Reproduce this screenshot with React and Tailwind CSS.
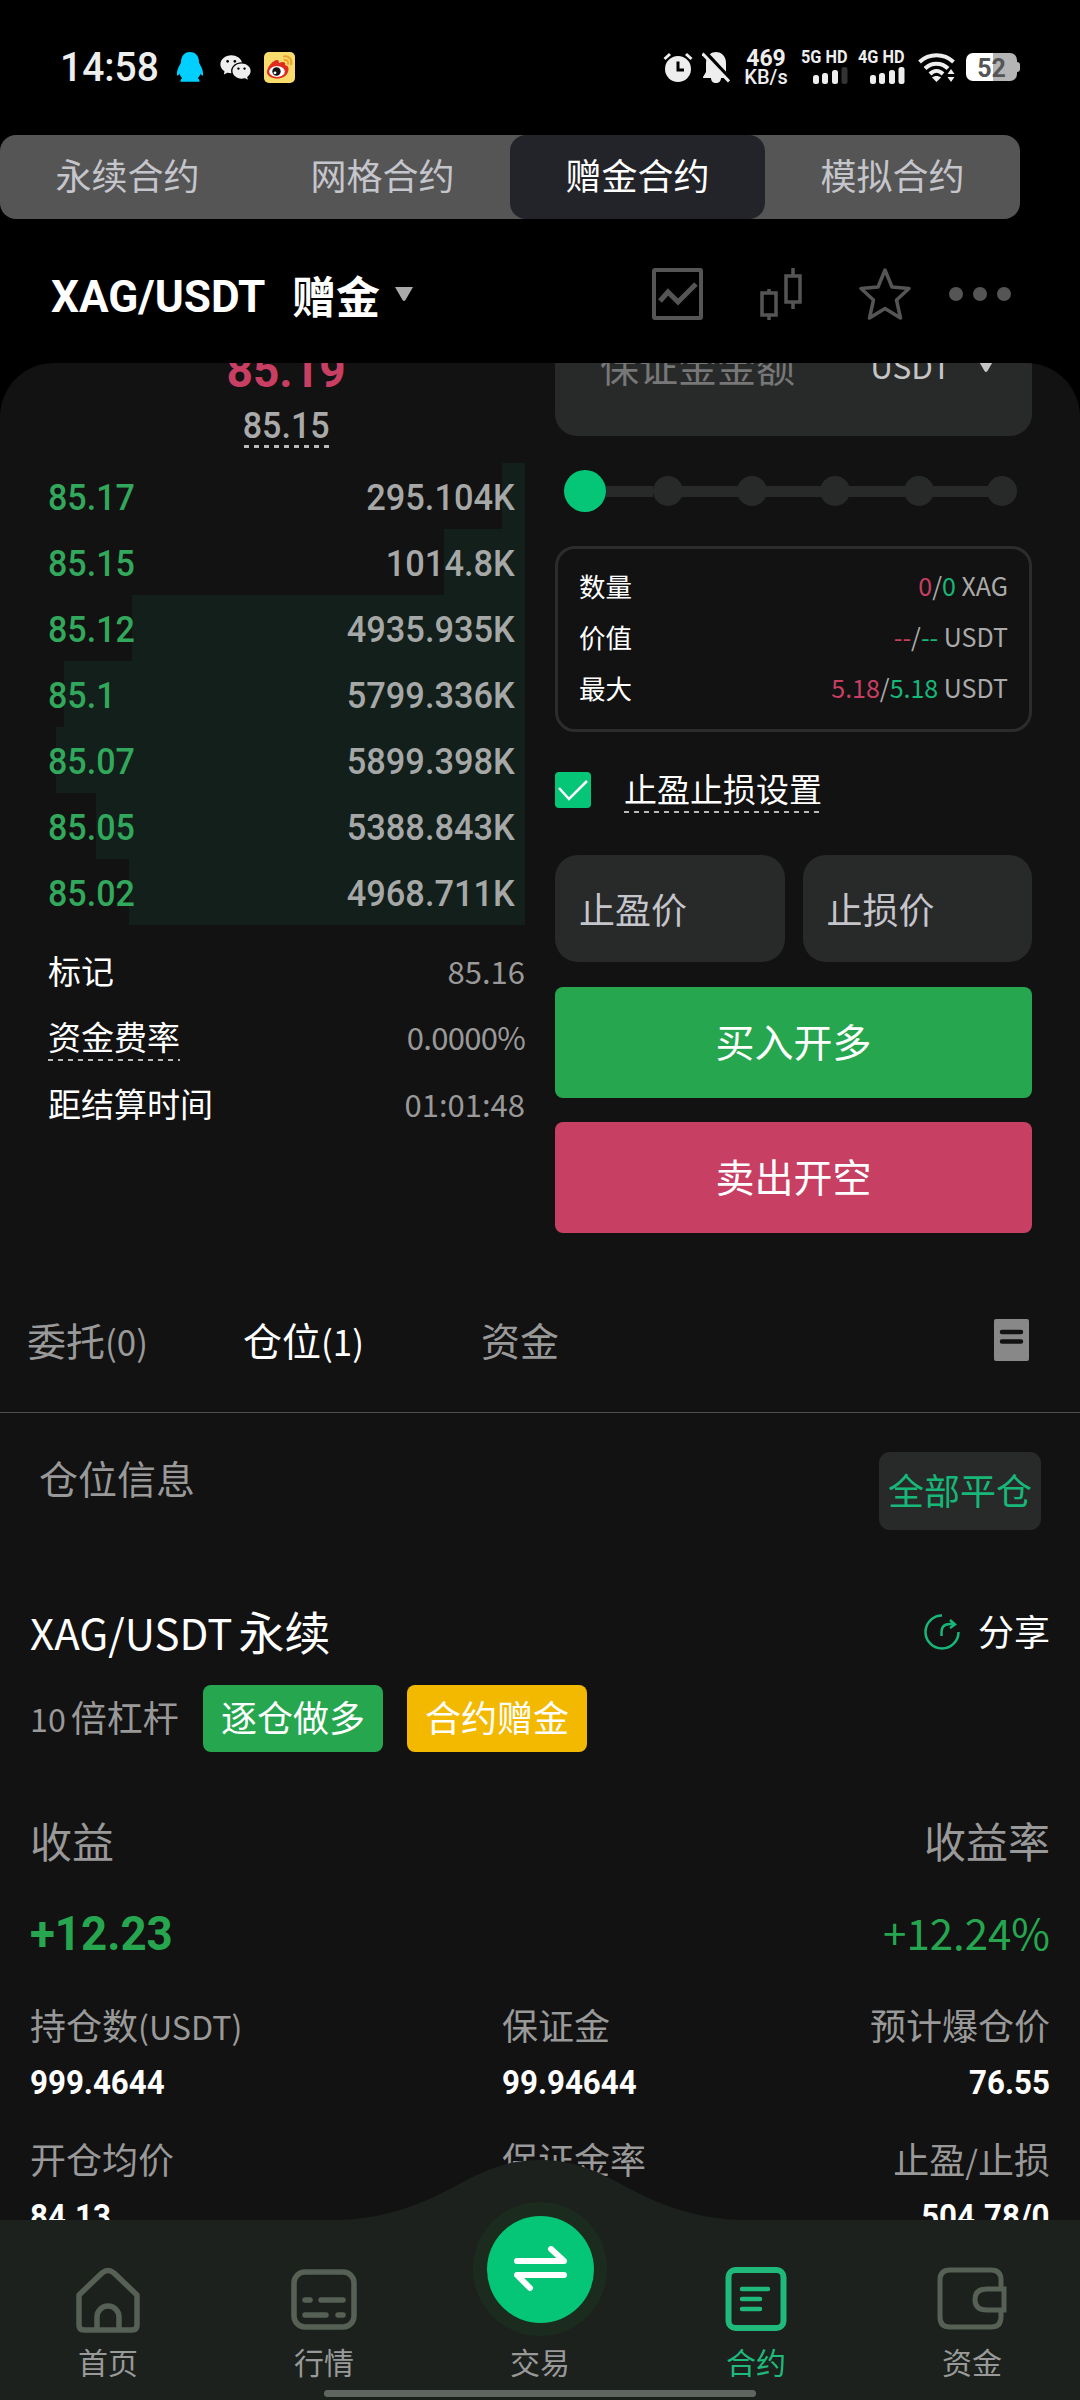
// Futures trading screen: order book, order form, open position and bottom nav

import { RiWechatFill } from 'react-icons/ri'
import clsx from 'clsx'

const contractTabs = ['永续合约', '网格合约', '赠金合约', '模拟合约']

const bids = [
  { price: '85.17', amount: '295.104K', depth: 23 },
  { price: '85.15', amount: '1014.8K', depth: 81 },
  { price: '85.12', amount: '4935.935K', depth: 393 },
  { price: '85.1', amount: '5799.336K', depth: 461 },
  { price: '85.07', amount: '5899.398K', depth: 469 },
  { price: '85.05', amount: '5388.843K', depth: 429 },
  { price: '85.02', amount: '4968.711K', depth: 396 },
]

const marketInfo = [
  { label: '标记', value: '85.16' },
  { label: '资金费率', value: '0.0000%', dashed: true },
  { label: '距结算时间', value: '01:01:48' },
]

const orderInfo = [
  { label: '数量', short: '0', long: '0', unit: 'XAG' },
  { label: '价值', short: '--', long: '--', unit: 'USDT' },
  { label: '最大', short: '5.18', long: '5.18', unit: 'USDT' },
]

// Latin runs sit a bit smaller than the Chinese text around them
function Latin({ children }) {
  return <span className="text-[0.895em]">{children}</span>
}

// ── Status bar ─────────────────────────────────────────────────────────────────

function Signal({ label, dimLast }) {
  return (
    <div className="w-[47px] flex flex-col items-end">
      <span className="w-full h-[15px] leading-[15px] text-[18.5px] font-bold whitespace-nowrap origin-left scale-x-[0.88]">
        {label}
      </span>
      <svg className="mt-[2px]" width="36" height="17" fill="#eee">
        <rect x="1" y="8" width="6" height="9" rx="2.5" />
        <rect x="10" y="6" width="6" height="11" rx="2.5" />
        <rect x="20" y="3" width="6" height="14" rx="2.5" />
        <rect x="29.500" y="0" width="6" height="17" rx="2.5" fill={dimLast ? '#333' : '#eee'} />
      </svg>
    </div>
  )
}

function StatusBar() {
  return (
    <div className="h-[135px] shrink-0 pl-[60px] pr-[60px] pb-[1px] flex items-center font-[Roboto] text-[#eee]">
      <span className="w-[102px] pt-[2px] text-[41px] font-medium origin-left scale-x-[0.95]">14:58</span>

      {/* QQ */}
      <svg className="ml-[14px]" width="28" height="30" viewBox="0 0 28 30" fill="#00cfff">
        <path d="M14 0C8 0 5 4.500 5 10.500C3 14.500 0.500 18.500 1 23C1.200 24.200 2.500 23.500 3.600 21.800C4.200 24 5 25 6.200 26.200C4.500 27 4.300 28 4.600 29.800H23.400C23.700 28 23.500 27 21.800 26.200C23 25 23.800 24 24.400 21.800C25.500 23.500 26.800 24.200 27 23C27.500 18.500 25 14.500 23 10.500C23 4.500 20 0 14 0Z" />
      </svg>
      <RiWechatFill className="ml-[15px]" size={33} />

      {/* Weibo */}
      <svg className="ml-[12px]" width="31" height="31" viewBox="0 0 31 31">
        <rect width="31" height="31" rx="5" fill="#f9dc6c" />
        <path d="M3 20C3 15 9 8 13 8C15 8 15 10 15 11C19 9 22 10 21 13C25 14 25 17 24 20C22 25 17 26.500 13 26.500C8 26.500 3 24 3 20Z" fill="#e02b20" />
        <ellipse cx="13" cy="19.500" rx="7.800" ry="5.400" fill="#fff" />
        <circle cx="12.500" cy="19.500" r="4.200" fill="#111" />
        <circle cx="11" cy="20.800" r="1.400" fill="#fff" />
        <path d="M20 4.500C25 3.500 28.500 8 27 12.500M20.500 8C23 7.500 24.500 9.500 24 12" fill="none" stroke="#efa32f" strokeWidth="2" strokeLinecap="round" />
      </svg>

      <div className="ml-auto flex items-center">
        {/* Alarm */}
        <svg width="30" height="30" viewBox="0 0 30 30">
          <circle cx="15" cy="17" r="13" fill="#eee" />
          <path d="M1.500 7L7 2M28.500 7L23 2" stroke="#eee" strokeWidth="3" />
          <path d="M15 9.500V18H21" fill="none" stroke="#000" strokeWidth="3" />
        </svg>
        {/* Muted bell */}
        <svg className="ml-[9px]" width="28" height="31" viewBox="0 0 28 31">
          <path d="M14 0C18 0 24 3 24 11V20L27 25V26H1V25L4 20V11C4 3 10 0 14 0ZM9 26H19C19 29 17 31 14 31C11 31 9 29 9 26Z" fill="#eee" />
          <path d="M3 0L29 28" stroke="#000" strokeWidth="4" />
          <path d="M0.500 1.500L27 29.500" stroke="#eee" strokeWidth="3" />
        </svg>
        <div className="ml-[14px] pt-[2px] w-[44px] flex flex-col items-center font-bold leading-[19px]">
          <span className="text-[23px]">469</span>
          <span className="text-[20px] font-medium">KB/s</span>
        </div>
        <div className="ml-[13px]">
          <Signal label="5G HD" dimLast />
        </div>
        <div className="ml-[10px]">
          <Signal label="4G HD" />
        </div>
        {/* Wifi */}
        <svg className="ml-[13px]" width="38" height="31" viewBox="0 0 38 31">
          <g fill="none" stroke="#eee" strokeWidth="4">
            <path d="M1.500 10C11 1 26 1 35.500 10" />
            <path d="M7 16.500C13.500 10 23.500 10 30 16.500" />
            <path d="M12 22C16 18 21 18 25 22" />
          </g>
          <path d="M18.500 30L14 25.500C16.500 23.500 20.500 23.500 23 25.500Z" fill="#eee" />
          <path d="M33 17L36.500 22H29.500ZM33 30L36.500 25H29.500Z" fill="#eee" />
        </svg>
        {/* Battery */}
        <div className="ml-[10px] flex items-center">
          <div className="w-[51px] h-[28px] pt-[2px] rounded-[7px] bg-linear-to-r from-white from-52% to-[#b5b5b5] to-52% flex items-center justify-center text-[#555] text-[25px] font-bold leading-none">
            52
          </div>
          <div className="w-[3px] h-[10px] rounded-r-full bg-[#b5b5b5]" />
        </div>
      </div>
    </div>
  )
}

// ── Header ─────────────────────────────────────────────────────────────────────

function Header() {
  return (
    <div className="h-[144px] shrink-0 pl-[51px] flex items-center pt-[6px]">
      <span className="w-[241px] pt-[6px] font-[Roboto] font-bold text-[45px] text-white origin-left scale-x-[0.98]">
        XAG/USDT
      </span>
      <span className="text-[44px] leading-none font-bold text-white pt-[2px]">赠金</span>
      <svg className="ml-[15px]" width="18" height="14" fill="#aaa">
        <path d="M0 0H18L10.500 13Q9 15 7.500 13Z" />
      </svg>

      <svg className="ml-[239px]" width="51" height="52" fill="none" stroke="#555" strokeWidth="4">
        <rect x="2" y="2" width="47" height="48" rx="1" />
        <path d="M8 33L16 24L26 34L44 16" strokeWidth="5" />
      </svg>
      <svg className="ml-[57px]" width="42" height="52" fill="none" stroke="#555" strokeWidth="3.500">
        <rect x="2" y="25" width="14" height="22" />
        <path d="M9 21V25M9 47V52M33 0V8M33 34V41" />
        <rect x="26" y="8" width="14" height="26" />
      </svg>
      <svg className="ml-[56px]" width="54" height="54" viewBox="0 0 54 54" fill="none" stroke="#555" strokeWidth="3.500" strokeLinejoin="round">
        <path d="M27 3L34 20L51 21.500L38.500 33L42.500 51L27 41.500L11.500 51L15.500 33L3 21.500L20 20Z" />
      </svg>
      <svg className="ml-[37px]" width="62" height="14" fill="#555">
        <circle cx="7" cy="7" r="7" />
        <circle cx="31" cy="7" r="7" />
        <circle cx="55" cy="7" r="7" />
      </svg>
    </div>
  )
}

// ── Order book (left column) ───────────────────────────────────────────────────

function OrderBook() {
  return (
    <div className="w-[477px] -mt-[24px]">
      <div className="font-[Roboto]">
        <div className="h-[63px] flex items-center justify-center text-[48px] font-bold text-[#c83f63]">
          <span className="scale-x-[0.96]">85.19</span>
        </div>
        <div className="h-[46px] flex justify-center">
          <span className="w-[85px] pt-[2px] flex items-center justify-center text-[37px] font-medium text-[#aaa] bg-[repeating-linear-gradient(90deg,#bbb_0_5px,transparent_5px_10px)] bg-[length:100%_3px] bg-bottom bg-no-repeat">
            <span className="scale-x-[0.92]">85.15</span>
          </span>
        </div>

        <div className="mt-[15px]">
          {bids.map((b) => (
            <div key={b.price} className="relative h-[66px] pt-[4px] pr-[10px] flex items-center justify-between text-[37px] font-medium">
              <div className="absolute right-0 inset-y-0 bg-[#121f1b]" style={{ width: b.depth }} />
              <span className="relative text-[#32a85c] origin-left scale-x-[0.92]">{b.price}</span>
              <span className="relative text-[#a6a8a7] origin-right scale-x-[0.93]">{b.amount}</span>
            </div>
          ))}
        </div>
      </div>

      <div className="mt-[14px] text-[33px]">
        {marketInfo.map((m) => (
          <div key={m.label} className="h-[66.5px] flex items-center justify-between">
            <span
              className={clsx(
                'h-[45px] leading-[41px] text-white',
                m.dashed &&
                  'bg-[repeating-linear-gradient(90deg,#bbb_0_5px,transparent_5px_10px)] bg-[length:100%_2px] bg-bottom bg-no-repeat'
              )}
            >
              {m.label}
            </span>
            <span className={clsx('pb-[3px] text-[31px] text-[#999]', m.dashed && 'tracking-[-0.7px]')}>
              {m.value}
            </span>
          </div>
        ))}
      </div>
    </div>
  )
}

// ── Order form (right column) ──────────────────────────────────────────────────

function OrderForm() {
  return (
    <div className="w-[477px] -mt-[65px]">
      <div className="h-[138px] rounded-[22px] bg-[#282a2a] pl-[45px] pr-[37px] pb-[4px] flex items-center">
        <span className="text-[39px] text-[#777]">保证金金额</span>
        <span className="ml-auto pt-[2px] text-[31.5px] text-[#c5c5c5]">USDT</span>
        <svg className="ml-[26px]" width="18" height="14" fill="#c5c5c5">
          <path d="M0 0H18L10.500 13Q9 15 7.500 13Z" />
        </svg>
      </div>

      {/* Size slider */}
      <div className="mt-[34px] ml-[9px] w-[453px] h-[42px] flex items-center">
        <div className="size-[42px] rounded-full bg-[#05c577]" />
        <div className="w-[47px] h-[11px] bg-[#282a2a]" />
        {[20, 40, 60, 80, 100].map((step) => (
          <div key={step} className={clsx('flex items-center', step < 100 && 'flex-1')}>
            <div className="size-[30px] rounded-full bg-[#282a2a]" />
            {step < 100 && <div className="flex-1 h-[11px] -mx-px bg-[#282a2a]" />}
          </div>
        ))}
      </div>

      <div className="mt-[34px] h-[186px] border-3 border-[#2b2c2c] rounded-[20px] px-[21px] pb-[4px] flex flex-col justify-center text-[26.5px]">
        {orderInfo.map((o) => (
          <div key={o.label} className="h-[51px] flex items-center justify-between">
            <span className="text-white">{o.label}</span>
            <span className="text-[25px] text-[#aaa]">
              <span className="text-[#c83f63]">{o.short}</span>/<span className="text-[#16b778]">{o.long}</span> {o.unit}
            </span>
          </div>
        ))}
      </div>

      <div className="mt-[35px] h-[46px] flex items-center">
        <svg width="36" height="36" fill="none">
          <rect width="36" height="36" rx="4" fill="#05c577" />
          <path d="M4 16L14 27L32 9" stroke="#fff" strokeWidth="2.500" />
        </svg>
        <span className="ml-[33px] h-[46px] leading-[43px] text-[33px] text-white bg-[repeating-linear-gradient(90deg,#bbb_0_5px,transparent_5px_10px)] bg-[length:100%_2px] bg-bottom bg-no-repeat">
          止盈止损设置
        </span>
      </div>

      <div className="mt-[42px] grid grid-cols-2 gap-[18px] text-[36px] text-[#c5c5cc]">
        <div className="h-[107px] pb-[2px] rounded-[23px] bg-[#282a2a] pl-[24px] flex items-center">止盈价</div>
        <div className="h-[107px] pb-[2px] rounded-[23px] bg-[#282a2a] pl-[24px] flex items-center">止损价</div>
      </div>

      <button className="mt-[25px] w-full h-[111px] pb-[5px] rounded-[8px] bg-[#26a74f] text-white text-[39px] flex items-center justify-center">
        买入开多
      </button>
      <button className="mt-[24px] w-full h-[111px] pb-[5px] rounded-[8px] bg-[#c74064] text-white text-[39px] flex items-center justify-center">
        卖出开空
      </button>
    </div>
  )
}

// ── Position ───────────────────────────────────────────────────────────────────

function Stat({ label, value, right }) {
  return (
    <div className={clsx('flex flex-col', right && 'items-end')}>
      <span className="h-[50px] leading-[46px] text-[36px] text-[#999]">{label}</span>
      <span
        className={clsx(
          'mt-[11px] h-[40px] leading-[40px] font-[Roboto] font-bold text-[34px] text-white scale-x-[0.92]',
          right ? 'origin-right' : 'origin-left self-start'
        )}
      >
        {value}
      </span>
    </div>
  )
}

function Position() {
  return (
    <div>
      <div className="pt-[39px] px-[39px] flex items-start justify-between">
        <span className="h-[56px] leading-[51px] text-[39px] text-[#999]">仓位信息</span>
        <button className="w-[162px] h-[78px] pb-[4px] rounded-[11px] bg-[#282a2a] text-[36px] text-[#16b778] whitespace-nowrap flex items-center justify-center">
          全部平仓
        </button>
      </div>

      <div className="px-[30px]">
        <div className="mt-[73px] h-[60px] pb-[5px] flex items-center justify-between text-white">
          <span className="flex items-baseline text-[46px] leading-[56px]">
            <span className="text-[42px]">XAG/USDT</span>
            <span className="ml-[6px]">永续</span>
          </span>
          <span className="flex items-center text-[36px] pb-px">
            <svg className="mr-[18px] mt-[3px]" width="36" height="36" fill="none" stroke="#16b778" strokeWidth="2.500">
              <path d="M18 1.500A16.500 16.500 0 1 0 34.500 18M17.500 22V18Q17.500 10 26 10H30M26 6L31 10.500L26 14" />
            </svg>
            分享
          </span>
        </div>

        <div className="mt-[22px] h-[67px] flex items-center text-[36px] leading-[63px]">
          <span className="w-[173px] pb-[3px] flex items-baseline text-[#999] whitespace-nowrap">
            <Latin>10</Latin>
            <span className="ml-[5px]">倍杠杆</span>
          </span>
          <span className="h-[67px] px-[18px] rounded-[8px] bg-[#26a74f] text-white">逐仓做多</span>
          <span className="ml-[24px] h-[67px] px-[18px] rounded-[8px] bg-[#f3b900] text-white">合约赠金</span>
        </div>

        <div className="mt-[60px] h-[60px] leading-[56px] flex justify-between text-[42px] text-[#999]">
          <span>收益</span>
          <span>收益率</span>
        </div>
        <div className="mt-[31px] h-[60px] flex items-center justify-between text-[#26a74f]">
          <span className="pt-[2px] font-[Roboto] font-bold text-[48px] origin-left scale-x-[0.95]">+12.23</span>
          <span className="pb-[2px] text-[42px] leading-[56px]">+12.24%</span>
        </div>

        <div className="mt-[38px] grid grid-cols-[472px_1fr_1fr] gap-y-[33px]">
          <Stat label={<>持仓数<Latin>(USDT)</Latin></>} value="999.4644" />
          <Stat label="保证金" value="99.94644" />
          <Stat label="预计爆仓价" value="76.55" right />
          <Stat label="开仓均价" value="84.13" />
          <Stat label="保证金率" value="" />
          <Stat label={<>止盈<Latin>/</Latin>止损</>} value="504.78/0" right />
        </div>
      </div>
    </div>
  )
}

// ── Bottom nav ─────────────────────────────────────────────────────────────────

function NavItem({ label, active, children }) {
  return (
    <div className="flex flex-col items-center">
      <div className="mt-[104px] h-[72px] flex items-center justify-center">{children}</div>
      <span
        className={clsx(
          'mt-[5px] h-[40px] leading-[40px] text-[30px]',
          active ? 'text-[#1fb97c]' : 'text-[#999]'
        )}
      >
        {label}
      </span>
    </div>
  )
}

function BottomNav() {
  return (
    <nav className="absolute bottom-0 inset-x-0 h-[240px]">
      <svg className="absolute inset-0" width="1080" height="240" fill="#1c211d">
        <path d="M0 60H333C385 60 425 43 461 23C490 7 512 0 540 0C568 0 590 7 619 23C655 43 695 60 747 60H1080V240H0Z" />
      </svg>

      <div className="relative grid grid-cols-5">
        <NavItem label="首页">
          <svg width="66" height="68" fill="none" stroke="#566054" strokeWidth="5.500" strokeLinejoin="round">
            <path d="M4 29L27 7Q33 2 39 7L62 29V59Q62 64 57 64H9Q4 64 4 59Z" />
            <path d="M22 64V51A11 11 0 0 1 44 51V64" />
          </svg>
        </NavItem>
        <NavItem label="行情">
          <svg width="66" height="64" fill="none" stroke="#566054" strokeWidth="5.500" strokeLinecap="round">
            <rect x="3" y="4" width="60" height="55" rx="11" />
            <path d="M14 32H19M30 32H52M14 47H35M47 47H52" />
          </svg>
        </NavItem>

        <div className="flex flex-col items-center">
          <div className="mt-[42px] size-[134px] rounded-full bg-[#1b2c1f] flex items-center justify-center">
            <div className="size-[107px] rounded-full bg-[#05c577] flex items-center justify-center">
              <svg width="58" height="46" fill="none" stroke="#fff" strokeWidth="6" strokeLinecap="round" strokeLinejoin="round">
                <path d="M6 15H53L40 3" />
                <path d="M53 29H6L19 42" />
              </svg>
            </div>
          </div>
          <span className="mt-[5px] h-[40px] leading-[40px] text-[30px] text-[#999]">交易</span>
        </div>

        <NavItem label="合约" active>
          <svg width="62" height="66" fill="none" stroke="#1fb97c" strokeWidth="6" strokeLinecap="round">
            <rect x="3.500" y="3" width="55" height="58" rx="7" />
            <path d="M17 22H43M17 32H35M17 42H35" strokeWidth="4.500" />
          </svg>
        </NavItem>
        <NavItem label="资金">
          <svg width="70" height="66" fill="none" stroke="#566054" strokeWidth="5">
            <path d="M64 23V13Q64 3 54 3H13Q3 3 3 13V50Q3 60 13 60H54Q64 60 64 50V43" />
            <path d="M67 22H50Q38 22 38 32.500Q38 43 50 43H67Z" />
          </svg>
        </NavItem>
      </div>

      <div className="absolute bottom-[3px] left-[324px] w-[432px] h-[7px] rounded-full bg-[#5f655f]" />
    </nav>
  )
}

// ── Page ───────────────────────────────────────────────────────────────────────

export default function App() {
  return (
    <div className="relative w-[1080px] h-[2400px] bg-black overflow-hidden flex flex-col font-['Noto_Sans_CJK_SC',sans-serif]">
      <StatusBar />

      <div className="w-[1020px] h-[84px] shrink-0 rounded-[16px] bg-[#555] grid grid-cols-4 text-[36px]">
        {contractTabs.map((tab) => (
          <div
            key={tab}
            className={clsx(
              'h-[84px] pb-[6px] flex items-center justify-center rounded-[16px]',
              tab === '赠金合约' ? 'bg-[#232429] text-white' : 'text-[#c5c5cc]'
            )}
          >
            {tab}
          </div>
        ))}
      </div>

      <Header />

      <main className="flex-1 min-h-0 overflow-hidden rounded-t-[54px] bg-[#121212]">
        <div className="px-[48px] flex items-start justify-between">
          <OrderBook />
          <OrderForm />
        </div>

        {/* Order / position / asset tabs */}
        <div className="mt-[39px] h-[141px] pl-[27px] pr-[51px] pb-[5px] border-b border-[#4f4f4f] flex items-center text-[39px] text-[#999]">
          <span className="w-[216px] pb-px">委托<Latin>(0)</Latin></span>
          <span className="w-[238px] pb-px text-white">仓位<Latin>(1)</Latin></span>
          <span className="pb-px">资金</span>
          <svg className="ml-auto" width="35" height="42">
            <rect width="35" height="42" rx="2" fill="#888" />
            <path d="M8 13H27M8 22.500H27" stroke="#121212" strokeWidth="4.500" strokeLinecap="round" />
          </svg>
        </div>

        <Position />
      </main>

      <BottomNav />
    </div>
  )
}
